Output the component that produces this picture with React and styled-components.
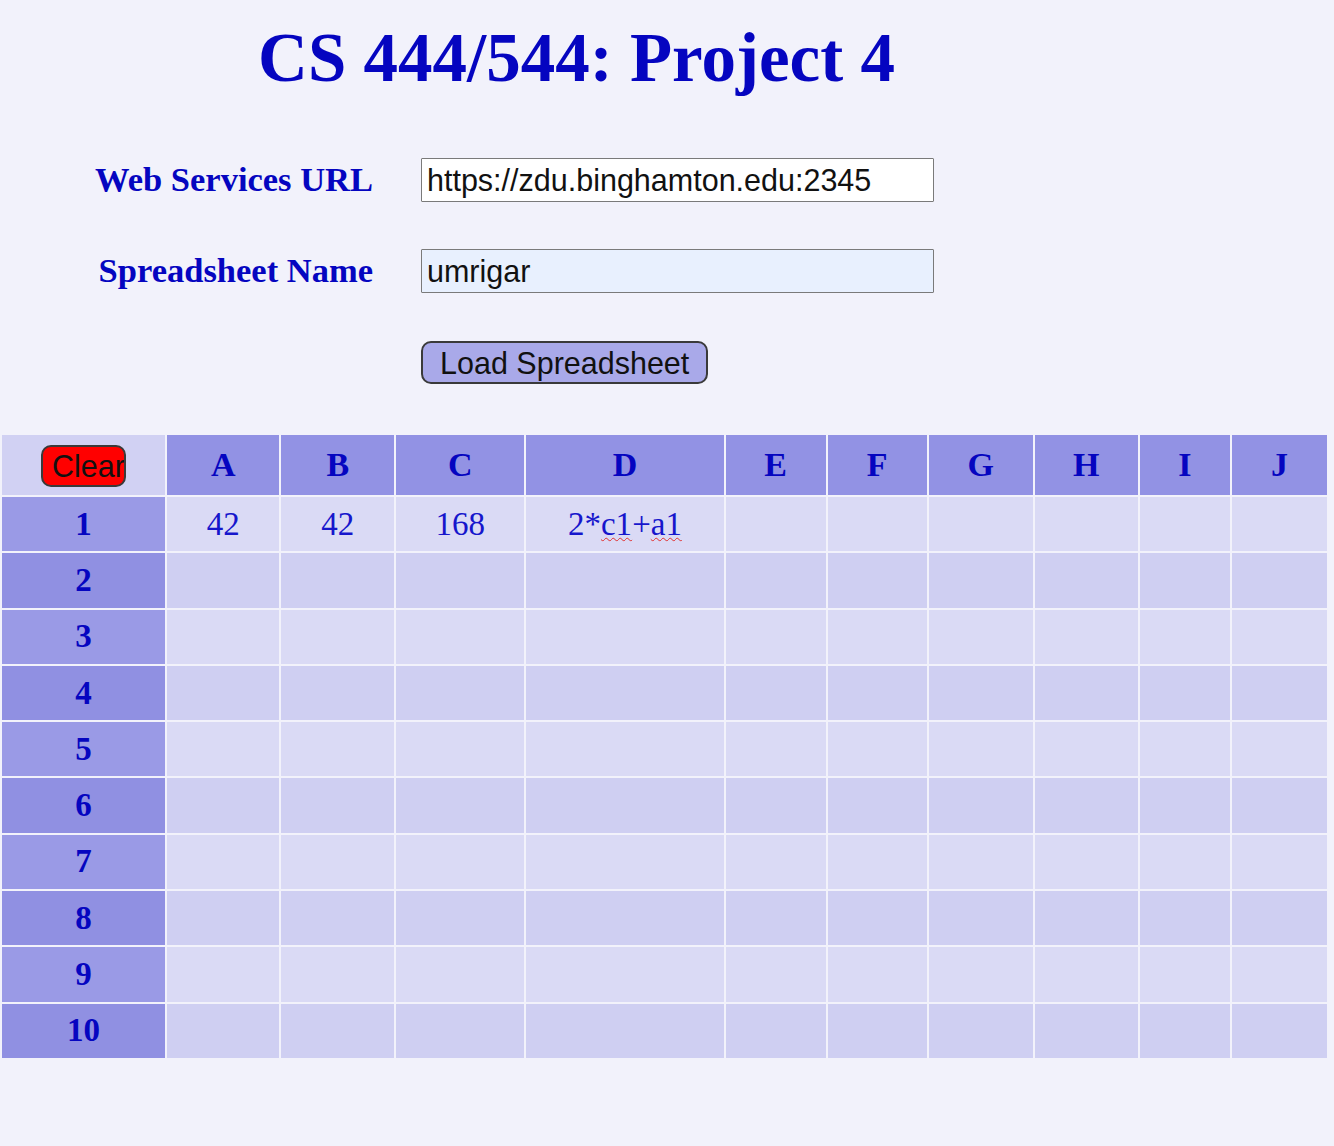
import React from "react";
import styled, { createGlobalStyle } from "styled-components";

const GlobalStyle = createGlobalStyle`
  html, body {
    margin: 0;
    padding: 0;
    background: #f2f2fb;
  }
  body {
    font-family: "Liberation Serif", "Times New Roman", serif;
  }
`;

const COLS = ["A", "B", "C", "D", "E", "F", "G", "H", "I", "J"];
const WIDTHS = [163, 112, 113, 128, 197, 100, 99, 104, 103, 90, 95];
const ROWS = 10;

const Page = styled.main`
  width: 100%;
  min-height: 1146px;
  padding-top: 20px;
  box-sizing: border-box;
`;

const Title = styled.h1`
  margin: 0;
  width: 1153px;
  text-align: center;
  font-family: "Liberation Serif", "Times New Roman", serif;
  font-weight: bold;
  font-size: 69px;
  line-height: 76px;
  color: #0505c0;
`;

const Form = styled.form`
  display: grid;
  grid-template-columns: 373px 513px;
  column-gap: 48px;
  row-gap: 47px;
  align-items: baseline;
  margin-top: 62px;
`;

const Label = styled.label`
  text-align: right;
  font-family: "Liberation Serif", "Times New Roman", serif;
  font-weight: bold;
  font-size: 34.5px;
  color: #0505c0;
`;

const TextInput = styled.input`
  box-sizing: border-box;
  width: 513px;
  height: 44px;
  padding: 0 5px;
  border: 1px solid #7a7a7a;
  border-radius: 1px;
  background: ${(p) => p.$bg || "#ffffff"};
  font-family: "Liberation Sans", Arial, sans-serif;
  font-size: 30.5px;
  color: #111;
  outline: none;
`;

const Actions = styled.div`
  grid-column: 2;
  padding-top: 1px;
`;

const LoadButton = styled.button`
  box-sizing: border-box;
  height: 43px;
  padding: 0 17px;
  border: 2px solid #3a3a3a;
  border-radius: 10px;
  background: #a9a9e9;
  font-family: "Liberation Sans", Arial, sans-serif;
  font-size: 30.5px;
  line-height: 36px;
  color: #111;
  cursor: pointer;
`;

const Sheet = styled.table`
  margin-top: 49px;
  border-collapse: separate;
  border-spacing: 2px;
  table-layout: fixed;
  width: 1329px;
`;

const ColHead = styled.th`
  height: 60px;
  padding: 0;
  background: #9292e4;
  font-family: "Liberation Serif", "Times New Roman", serif;
  font-weight: bold;
  font-size: 34px;
  color: #0505c0;
  text-align: center;
  vertical-align: middle;
`;

const Corner = styled(ColHead)`
  background: #d1d1f3;
`;

const RowHead = styled.th`
  height: 54.3px;
  padding: 0;
  background: ${(p) => (p.$odd ? "#9a9ae6" : "#9090e2")};
  font-family: "Liberation Serif", "Times New Roman", serif;
  font-weight: bold;
  font-size: 33px;
  color: #0505c0;
  text-align: center;
  vertical-align: middle;
`;

const Cell = styled.td`
  height: 54.3px;
  padding: 0;
  background: ${(p) => (p.$odd ? "#dadaf5" : "#cfcff2")};
  font-family: "Liberation Serif", "Times New Roman", serif;
  font-size: 33px;
  color: #1616cc;
  text-align: center;
  vertical-align: middle;
  white-space: nowrap;
`;

const ClearButton = styled.button`
  box-sizing: border-box;
  width: 85px;
  height: 42px;
  padding: 0 0 0 9px;
  border: 2px solid #3a3a3a;
  border-radius: 10px;
  background: #ff0000;
  font-family: "Liberation Sans", Arial, sans-serif;
  font-size: 30.5px;
  line-height: 36px;
  color: #111;
  text-align: left;
  white-space: nowrap;
  overflow: hidden;
  vertical-align: middle;
  cursor: pointer;
`;

const Misspelt = styled.span`
  text-decoration: underline wavy #e03030;
  text-decoration-thickness: 1px;
  text-underline-offset: 2px;
`;

const Formula = () => (
  <>
    2*<Misspelt>c1</Misspelt>+<Misspelt>a1</Misspelt>
  </>
);

const values = {
  "1A": "42",
  "1B": "42",
  "1C": "168",
  "1D": <Formula />,
};

export default function App() {
  const rows = Array.from({ length: ROWS }, (_, i) => i + 1);
  return (
    <Page>
      <GlobalStyle />
      <Title>CS 444/544: Project 4</Title>
      <Form onSubmit={(e) => e.preventDefault()}>
        <Label htmlFor="ws-url">Web Services URL</Label>
        <TextInput id="ws-url" defaultValue="https://zdu.binghamton.edu:2345" />
        <Label htmlFor="ss-name">Spreadsheet Name</Label>
        <TextInput id="ss-name" $bg="#e8f0fe" defaultValue="umrigar" />
        <Actions>
          <LoadButton type="submit">Load Spreadsheet</LoadButton>
        </Actions>
      </Form>
      <Sheet>
        <colgroup>
          {WIDTHS.map((w, i) => (
            <col key={i} style={{ width: w }} />
          ))}
        </colgroup>
        <thead>
          <tr>
            <Corner>
              <ClearButton type="button">Clear</ClearButton>
            </Corner>
            {COLS.map((c) => (
              <ColHead key={c}>{c}</ColHead>
            ))}
          </tr>
        </thead>
        <tbody>
          {rows.map((r) => (
            <tr key={r}>
              <RowHead $odd={r % 2 === 1}>{r}</RowHead>
              {COLS.map((c) => (
                <Cell key={c} $odd={r % 2 === 1}>
                  {values[`${r}${c}`] || ""}
                </Cell>
              ))}
            </tr>
          ))}
        </tbody>
      </Sheet>
    </Page>
  );
}
